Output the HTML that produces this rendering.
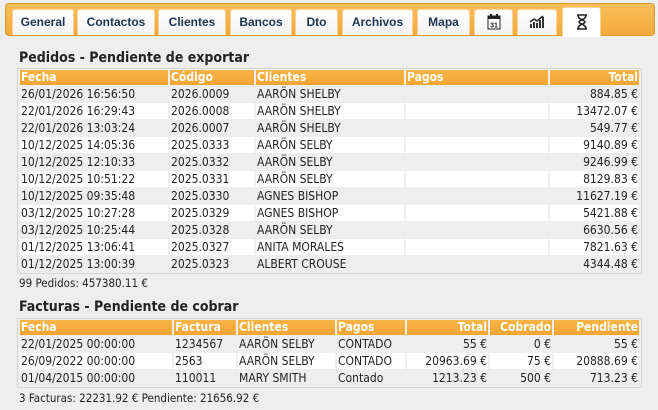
<!DOCTYPE html><html><head><meta charset="utf-8"><style>
*{margin:0;padding:0;box-sizing:border-box}
body{width:658px;height:410px;background:#eeeeee;font-family:"DejaVu Sans Condensed","Liberation Sans",sans-serif;font-size:12px;color:#222;position:relative;overflow:hidden}
.bar{position:absolute;left:5px;top:3px;width:650px;height:33px;background:linear-gradient(#fbbf5a,#f3a93a);border:1px solid #e09a30;border-radius:4px}
.tab{position:absolute;top:9px;height:26px;background:linear-gradient(#fff,#f3f3f3);border:1px solid #f6d39a;border-bottom:none;border-radius:3px 3px 0 0;text-align:center;line-height:25px;font-size:12px;font-weight:bold;font-family:"Liberation Sans",sans-serif;color:#1c3550}
.tab.act{top:7px;height:30px;background:#fff}
h2{position:absolute;left:19px;font-size:14px;font-weight:bold;color:#222}
table{position:absolute;border-collapse:separate;border-spacing:2px 1px;border:1px solid #d6d6d6;background:#eee}
th{background:linear-gradient(#f9b547,#f3a432);color:#fff;font-weight:bold;text-align:left;height:15px;line-height:15px;padding:0 1px;font-size:12px}
td{height:16px;line-height:16px;padding:0 1px;font-size:12px}
tr.w td{background:#fff}
.r{text-align:right}
.f{position:absolute;left:19px;font-size:11.5px}
</style></head><body>
<div class="bar"></div>
<div class="tab" style="left:12px;width:62px">General</div>
<div class="tab" style="left:77px;width:78px">Contactos</div>
<div class="tab" style="left:158px;width:68px">Clientes</div>
<div class="tab" style="left:230px;width:62px">Bancos</div>
<div class="tab" style="left:295px;width:43px">Dto</div>
<div class="tab" style="left:342px;width:71px">Archivos</div>
<div class="tab" style="left:417px;width:53px">Mapa</div>
<div class="tab" style="left:474px;width:39px"><svg width="14" height="16" viewBox="0 0 14 16" style="margin-top:4px"><rect x="1" y="2" width="12" height="13" fill="#fff" stroke="#222"/><rect x="1" y="2" width="12" height="3" fill="#222"/><rect x="3" y="0" width="2" height="3" fill="#222"/><rect x="9" y="0" width="2" height="3" fill="#222"/><text x="7" y="13.5" font-size="7" text-anchor="middle" font-family="Liberation Sans" font-weight="bold" fill="#222">31</text></svg></div>
<div class="tab" style="left:517px;width:40px"><svg width="16" height="14" viewBox="0 0 16 14" style="margin-top:5px"><path d="M1 13V9h2v4zM4 13V7h2v6zM7 13V8h2v5zM10 13V5h2v8zM13 13V2h2v11z" fill="#333"/><path d="M1 7L5 4L8 6L14 1" stroke="#222" stroke-width="1.5" fill="none"/></svg></div>
<div class="tab act" style="left:562px;width:39px"><svg width="12" height="16" viewBox="0 0 12 16" style="margin-top:6px"><path d="M1 1h10M1 15h10M2 1c0 5 7 5 7 7s-7 2-7 7M10 1c0 5-7 5-7 7s7 2 7 7" stroke="#222" stroke-width="1.6" fill="none"/></svg></div>
<h2 style="top:50px">Pedidos - Pendiente de exportar</h2>
<table style="left:17px;top:68px;width:625px">
<tr><th style="width:148px">Fecha</th><th style="width:84px">Código</th><th style="width:148px">Clientes</th><th style="width:142px">Pagos</th><th class="r">Total</th></tr>
<tr><td>26/01/2026 16:56:50</td><td>2026.0009</td><td>AARÖN SHELBY</td><td></td><td class="r">884.85 €</td></tr>
<tr class="w"><td>22/01/2026 16:29:43</td><td>2026.0008</td><td>AARÖN SHELBY</td><td></td><td class="r">13472.07 €</td></tr>
<tr><td>22/01/2026 13:03:24</td><td>2026.0007</td><td>AARÖN SHELBY</td><td></td><td class="r">549.77 €</td></tr>
<tr class="w"><td>10/12/2025 14:05:36</td><td>2025.0333</td><td>AARÖN SELBY</td><td></td><td class="r">9140.89 €</td></tr>
<tr><td>10/12/2025 12:10:33</td><td>2025.0332</td><td>AARÖN SELBY</td><td></td><td class="r">9246.99 €</td></tr>
<tr class="w"><td>10/12/2025 10:51:22</td><td>2025.0331</td><td>AARÖN SELBY</td><td></td><td class="r">8129.83 €</td></tr>
<tr><td>10/12/2025 09:35:48</td><td>2025.0330</td><td>AGNES BISHOP</td><td></td><td class="r">11627.19 €</td></tr>
<tr class="w"><td>03/12/2025 10:27:28</td><td>2025.0329</td><td>AGNES BISHOP</td><td></td><td class="r">5421.88 €</td></tr>
<tr><td>03/12/2025 10:25:44</td><td>2025.0328</td><td>AARÖN SELBY</td><td></td><td class="r">6630.56 €</td></tr>
<tr class="w"><td>01/12/2025 13:06:41</td><td>2025.0327</td><td>ANITA MORALES</td><td></td><td class="r">7821.63 €</td></tr>
<tr><td>01/12/2025 13:00:39</td><td>2025.0323</td><td>ALBERT CROUSE</td><td></td><td class="r">4344.48 €</td></tr>
</table>
<div class="f" style="top:276px">99 Pedidos: 457380.11 €</div>
<h2 style="top:299px">Facturas - Pendiente de cobrar</h2>
<table style="left:17px;top:318px;width:625px">
<tr><th style="width:152px">Fecha</th><th style="width:62px">Factura</th><th style="width:97px">Clientes</th><th style="width:68px">Pagos</th><th class="r" style="width:81px">Total</th><th class="r" style="width:62px">Cobrado</th><th class="r">Pendiente</th></tr>
<tr><td>22/01/2025 00:00:00</td><td>1234567</td><td>AARÖN SELBY</td><td>CONTADO</td><td class="r">55 €</td><td class="r">0 €</td><td class="r">55 €</td></tr>
<tr class="w"><td>26/09/2022 00:00:00</td><td>2563</td><td>AARÖN SELBY</td><td>CONTADO</td><td class="r">20963.69 €</td><td class="r">75 €</td><td class="r">20888.69 €</td></tr>
<tr><td>01/04/2015 00:00:00</td><td>110011</td><td>MARY SMITH</td><td>Contado</td><td class="r">1213.23 €</td><td class="r">500 €</td><td class="r">713.23 €</td></tr>
</table>
<div class="f" style="top:391px">3 Facturas: 22231.92 € Pendiente: 21656.92 €</div>
</body></html>
